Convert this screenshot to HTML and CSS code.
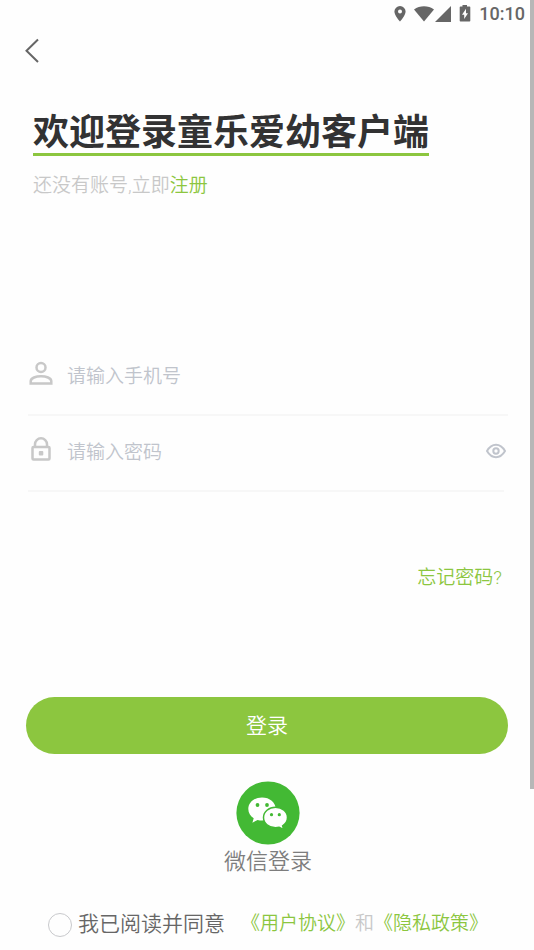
FILE: index.html
```html
<!DOCTYPE html>
<html lang="zh-CN">
<head>
<meta charset="utf-8">
<meta name="viewport" content="width=device-width, initial-scale=1">
<title>登录</title>
<link rel="stylesheet" href="styles.css">
</head>
<body>
<div class="scroll-thumb"></div>
<div class="status-bar">
  <svg class="pin" width="12" height="16" viewBox="0 0 12 16"><path fill-rule="evenodd" d="M6 0a5.600 5.600 0 0 0-5.600 5.600C.4 9.600 6 15.600 6 15.600s5.600-6 5.600-10A5.600 5.600 0 0 0 6 0zm0 3.600a2 2 0 1 1 0 4 2 2 0 0 1 0-4z"/></svg>
  <svg class="wifi" width="20" height="16" viewBox="0 0 20 16"><path d="M0 3.500C5.800-.8 14.200-.8 20 3.500L10 15.500z"/></svg>
  <svg class="signal" width="16" height="16" viewBox="0 0 16 16"><path d="M16 0v16H0z"/></svg>
  <svg class="battery" width="12" height="17" viewBox="0 0 12 17"><path fill-rule="evenodd" d="M3.500 0h4.500v1.500h2.500q.8 0 .8.800v13.400q0 .8-.8.800h-9q-.8 0-.8-.8V2.300q0-.8.800-.8h2zM7 3.800L3 9.700h2.200v4.300L9 8.200H7z"/></svg>
  <time>10:10</time>
</div>
<header class="nav">
  <button class="back" type="button" aria-label="返回"><svg width="16" height="26" viewBox="0 0 16 26"><path d="M14 1.500L2.500 12.700 14 24"/></svg></button>
</header>
<main>
  <section class="intro">
    <h1>欢迎登录童乐爱幼客户端</h1>
    <p>还没有账号,立即<a href="#register">注册</a></p>
  </section>
  <form>
    <div class="field">
      <label for="phone" aria-label="手机号"><svg width="26" height="26" viewBox="0 0 26 26"><circle cx="13" cy="6.500" r="4.500"/><path d="M2.700 22.500v-2.300c0-3.200 5.300-5 10.300-5s10.300 1.800 10.300 5v2.300z"/></svg></label>
      <input id="phone" type="tel" placeholder="请输入手机号">
    </div>
    <div class="field field-password">
      <label for="password" aria-label="密码"><svg width="26" height="26" viewBox="0 0 26 26"><rect x="4.500" y="10" width="17" height="12.500" rx="1"/><path d="M7 10V7.300a6 6 0 0 1 12 0V10"/><rect class="solid" x="10.800" y="14" width="4.500" height="4.500" rx="1"/></svg></label>
      <input id="password" type="password" placeholder="请输入密码">
      <button class="eye" type="button" aria-label="显示密码"><svg width="20" height="16" viewBox="0 0 20 16"><path d="M1 8C3.500 3.700 6.500 1.800 10 1.800S16.500 3.700 19 8c-2.500 4.300-5.500 6.200-9 6.200S3.500 12.300 1 8z"/><circle cx="10" cy="8" r="2.700"/></svg></button>
    </div>
    <a class="forgot" href="#forgot">忘记密码?</a>
    <button class="submit" type="submit">登录</button>
    <button class="wechat" type="button">
      <svg width="64" height="64" viewBox="0 0 64 64"><circle class="disc" cx="32" cy="32" r="31.600"/><path class="bubble" d="M26 16.500c-7.700 0-13.700 5-13.700 11.500 0 3.800 2.100 7.100 5.400 9.200l-1.300 4.500 5.200-2.700c1.400.4 2.900.6 4.400.6 7.700 0 13.700-5 13.700-11.600S33.700 16.500 26 16.500z"/><path class="bubble front" d="M39.500 26.300c-6.700 0-12 4.500-12 10.200s5.300 10.200 12 10.200c1.300 0 2.500-.2 3.700-.5l4.500 2.500-1.100-3.900c3-1.900 4.900-4.900 4.900-8.300 0-5.700-5.300-10.200-12-10.200z"/><circle class="disc" cx="21.500" cy="24" r="1.900"/><circle class="disc" cx="31" cy="24" r="1.900"/><circle class="disc" cx="35.500" cy="33.700" r="1.600"/><circle class="disc" cx="43.300" cy="33.700" r="1.600"/></svg>
      <span>微信登录</span>
    </button>
    <div class="terms">
      <input id="agree" type="checkbox">
      <label for="agree">我已阅读并同意</label>
      <p><a href="#terms">《用户协议》</a>和<a href="#privacy">《隐私政策》</a></p>
    </div>
  </form>
</main>
</body>
</html>
```
FILE: styles.css
```css
* { box-sizing: border-box; }
body {
  margin: 0;
  background: #fefefe;
  color: #323233;
  font-family: Roboto, "Noto Sans CJK SC", sans-serif;
  font-weight: 350;
}
h1, p { margin: 0; }
a { color: #8cc63f; text-decoration: none; }
button { padding: 0; border: 0; background: none; font: inherit; cursor: pointer; }
svg { display: block; }

.scroll-thumb {
  position: absolute;
  top: 0;
  right: 0;
  width: 4px;
  height: 83vh;
  background: #b7b7b7;
}

.status-bar {
  display: flex;
  align-items: center;
  justify-content: flex-end;
  height: 27px;
  padding-right: 9px;
  color: #666;
  font-size: 18px;
  font-weight: 500;
  line-height: 27px;
}
.status-bar svg { fill: #666; }
.wifi { margin-left: 8px; }
.signal { margin-left: 1px; }
.battery { margin: 0 8px; }

.nav { display: flex; height: 47px; padding: 0 24px; align-items: center; }
.back path { fill: none; stroke: #666; stroke-width: 2; }

.intro { padding: 40px 33px 0; }
h1 {
  width: fit-content;
  border-bottom: 3px solid #8cc63f;
  font-size: 36px;
  font-weight: 700;
  line-height: 39px;
  white-space: nowrap;
}
.intro p {
  margin-top: 16px;
  color: #c8c8c8;
  font-size: 19px;
  line-height: 28px;
}

form { display: flex; flex-direction: column; padding: 140px 26px 0 28px; }
.field {
  display: flex;
  align-items: center;
  height: 76px;
  border-bottom: 2px solid #f7f7f7;
}
.field-password { margin-right: 4px; }
.field label { margin-right: 13px; padding-bottom: 6px; }
.field label svg { fill: none; stroke: #c8c8c8; stroke-width: 2.500; }
.field .solid { fill: #c8c8c8; stroke: none; }
.field input {
  flex: 1;
  min-width: 0;
  padding: 0;
  border: 0;
  outline: 0;
  background: none;
  color: #323233;
  font: inherit;
  font-size: 19px;
  line-height: 28px;
}
.field input::placeholder { color: #c0c4cc; opacity: 1; }
.eye { margin-right: -2px; padding-bottom: 4px; }
.eye svg { fill: none; stroke: #c0c4cc; stroke-width: 2; }

.forgot {
  align-self: flex-end;
  margin: 72px 6px 0 0;
  font-size: 19px;
  line-height: 28px;
}
.submit {
  height: 57px;
  margin: 105px 0 0 -2px;
  padding-bottom: 4px;
  border-radius: 29px;
  background: #8cc63f;
  color: #fff;
  font-size: 21px;
}
.wechat {
  display: flex;
  flex-direction: column;
  align-items: center;
  align-self: center;
  margin-top: 27px;
  color: #7d7d7d;
  font-size: 22px;
  line-height: 34px;
}
.disc { fill: #43b934; }
.bubble { fill: #fff; }
.front { stroke: #43b934; stroke-width: 1.500; }

.terms {
  display: flex;
  align-items: center;
  margin: 30px -26px 0 20px;
  white-space: nowrap;
}
.terms input {
  appearance: none;
  flex: none;
  width: 24px;
  height: 24px;
  margin: 2px 6px 0 0;
  border: 1px solid #c8c9cc;
  border-radius: 50%;
}
.terms input:checked { background: #8cc63f; }
.terms label { color: #666; font-size: 21px; line-height: 30px; }
.terms p { margin-left: 16px; color: #c8c8c8; font-size: 19px; line-height: 28px; }
```
